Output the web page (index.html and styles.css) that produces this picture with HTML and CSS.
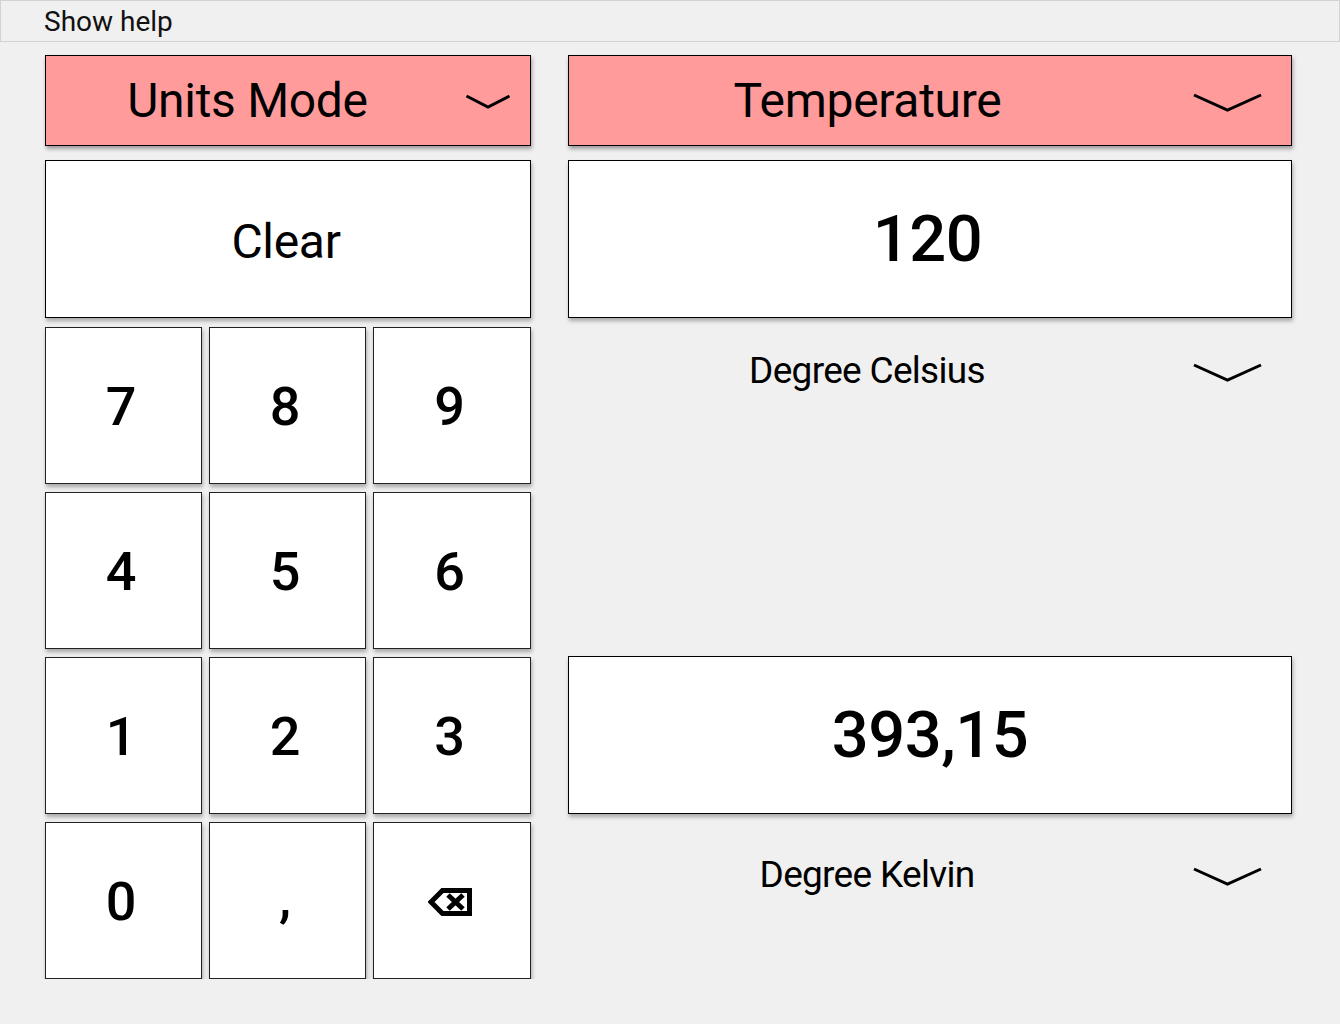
FILE: index.html
```html
<!DOCTYPE html>
<html>
<head>
<meta charset="utf-8">
<link rel="stylesheet" href="styles.css">
</head>
<body>
<div class="topbar">Show help</div>
<div class="main">
  <div class="left">
    <div class="header header-left">
      <span class="label">Units Mode</span>
      <span class="chev"><svg width="46" height="15" viewBox="0 0 46 15"><polyline points="1.5,2 23,13 44.5,2" fill="none" stroke="#000" stroke-width="3"/></svg></span>
    </div>
    <div class="btn clear">Clear</div>
    <div class="keypad">
      <div class="btn key">7</div>
      <div class="btn key">8</div>
      <div class="btn key">9</div>
      <div class="btn key">4</div>
      <div class="btn key">5</div>
      <div class="btn key">6</div>
      <div class="btn key">1</div>
      <div class="btn key">2</div>
      <div class="btn key">3</div>
      <div class="btn key">0</div>
      <div class="btn key comma">,</div>
      <div class="btn key back"><svg width="44" height="28" viewBox="0 0 44 28"><path d="M3,14 L14.5,2.5 L41.5,2.5 L41.5,25.5 L14.5,25.5 Z" fill="none" stroke="#000" stroke-width="5" stroke-linejoin="miter"/><path d="M20,7 L35,21 M35,7 L20,21" stroke="#000" stroke-width="5"/></svg></div>
    </div>
  </div>
  <div class="right">
    <div class="header header-right">
      <span class="label">Temperature</span>
      <span class="chev"><svg width="69" height="19" viewBox="0 0 69 19"><polyline points="1,2 34.5,17 68,2" fill="none" stroke="#000" stroke-width="3"/></svg></span>
    </div>
    <div class="btn value v1">120</div>
    <div class="selector sel1">
      <span class="label">Degree Celsius</span>
      <span class="chev"><svg width="69" height="19" viewBox="0 0 69 19"><polyline points="1,2 34.5,17 68,2" fill="none" stroke="#000" stroke-width="3"/></svg></span>
    </div>
    <div class="btn value value2">393,15</div>
    <div class="selector sel2">
      <span class="label">Degree Kelvin</span>
      <span class="chev"><svg width="69" height="19" viewBox="0 0 69 19"><polyline points="1,2 34.5,17 68,2" fill="none" stroke="#000" stroke-width="3"/></svg></span>
    </div>
  </div>
</div>
</body>
</html>
```

FILE: styles.css
```css
html, body {
  margin: 0;
  padding: 0;
  background: #f0f0f0;
  font-family: Roboto, "Liberation Sans", sans-serif;
  color: #000;
}

.topbar {
  height: 40px;
  border: 1px solid #d3d3d3;
  padding-left: 43px;
  font-size: 28px;
  line-height: 42px;
  color: #111;
  background: #f0f0f0;
}

.main {
  display: flex;
  gap: 37px;
  padding: 13px 0 0 45px;
}

.left {
  width: 486px;
  display: flex;
  flex-direction: column;
}

.right {
  width: 724px;
  display: flex;
  flex-direction: column;
}

.header {
  height: 89px;
  border: 1px solid #000;
  background: #ff9b9b;
  box-shadow: 1px 3px 4px rgba(0, 0, 0, 0.35);
  display: flex;
  align-items: center;
  font-size: 48px;
  letter-spacing: -0.3px;
}

.header .label,
.selector .label {
  text-align: center;
  white-space: nowrap;
}

.chev {
  display: flex;
  align-items: center;
}

.header-left .label {
  width: 403px;
}

.header-left .chev {
  margin-left: 16px;
  margin-top: 2px;
}

.header-right .label {
  width: 597px;
}

.header-right .chev {
  margin-left: 27px;
  margin-top: 4px;
}

.btn {
  background: #fff;
  border: 1px solid #000;
  box-shadow: 1px 3px 4px rgba(0, 0, 0, 0.3);
  display: flex;
  align-items: center;
  justify-content: center;
  box-sizing: border-box;
}

.clear {
  margin-top: 14px;
  height: 158px;
  font-size: 48px;
  padding-right: 4px;
  padding-top: 4px;
  letter-spacing: -0.3px;
}

.keypad {
  margin-top: 9px;
  display: grid;
  grid-template-columns: 157px 157px 158px;
  grid-auto-rows: 157px;
  column-gap: 7px;
  row-gap: 8px;
}

.key {
  font-size: 54px;
  font-weight: 500;
  border-color: #222;
  padding-right: 5px;
  padding-top: 2px;
}

.comma {
  padding-bottom: 8px;
}

.back {
  padding-right: 4px;
}

.value {
  margin-top: 14px;
  height: 158px;
  font-size: 65px;
  font-weight: 500;
  letter-spacing: -0.5px;
}

.v1 {
  padding-right: 5px;
}

.value2 {
  margin-top: 256px;
}

.selector {
  height: 60px;
  display: flex;
  align-items: center;
  font-size: 37px;
  letter-spacing: -0.7px;
}

.selector .label {
  width: 598px;
}

.selector .chev {
  margin-left: 27px;
  margin-top: 4px;
}

.sel1 {
  margin-top: 22px;
}

.sel2 {
  margin-top: 30px;
}
```
